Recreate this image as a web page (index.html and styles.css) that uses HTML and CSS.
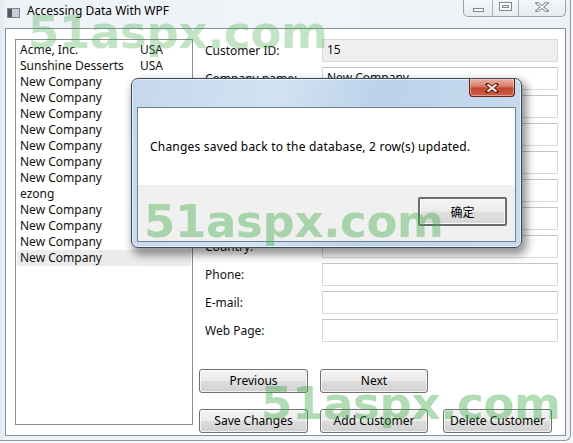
FILE: index.html
```html
<!DOCTYPE html>
<html>
<head>
<meta charset="utf-8">
<link rel="stylesheet" href="styles.css">
</head>
<body>
<div class="window">
  <div class="titlebar">
    <svg class="app-icon" width="13" height="10" viewBox="0 0 13 10"><rect x="0.5" y="0.5" width="12" height="9" fill="#c9ced3" stroke="#7d848b"/><rect x="1" y="1" width="4" height="8" fill="#4f575f"/></svg>
    <span class="title">Accessing Data With WPF</span>
    <div class="caption">
      <div class="cbtn cmin"><svg width="13" height="6" viewBox="0 0 13 6"><rect x="1.5" y="1.5" width="10" height="3" fill="#fff" stroke="#7b8690"/></svg></div>
      <div class="cbtn cmax"><svg width="13" height="9" viewBox="0 0 13 9"><rect x="0.5" y="0.5" width="12" height="8" fill="#fff" stroke="#7b8690"/><rect x="3.5" y="3.5" width="6" height="2" fill="#fff" stroke="#7b8690"/></svg></div>
      <div class="cbtn cclose"><svg width="14" height="10" viewBox="0 0 14 10"><path d="M2 1 L12 9 M12 1 L2 9" stroke="#7b8690" stroke-width="3.2" stroke-linecap="square"/><path d="M2 1 L12 9 M12 1 L2 9" stroke="#fff" stroke-width="1.4"/></svg></div>
    </div>
  </div>
  <div class="client">
    <div class="listbox">
      <div class="item"><span class="name">Acme, Inc.</span><span>USA</span></div>
      <div class="item"><span class="name">Sunshine Desserts</span><span>USA</span></div>
      <div class="item"><span class="name">New Company</span></div>
      <div class="item"><span class="name">New Company</span></div>
      <div class="item"><span class="name">New Company</span></div>
      <div class="item"><span class="name">New Company</span></div>
      <div class="item"><span class="name">New Company</span></div>
      <div class="item"><span class="name">New Company</span></div>
      <div class="item"><span class="name">New Company</span></div>
      <div class="item"><span class="name">ezong</span></div>
      <div class="item"><span class="name">New Company</span></div>
      <div class="item"><span class="name">New Company</span></div>
      <div class="item"><span class="name">New Company</span></div>
      <div class="item selected"><span class="name">New Company</span></div>
    </div>
    <div class="panel">
      <div class="form">
        <label>Customer ID:</label><div class="tb readonly">15</div>
        <label>Company name:</label><div class="tb">New Company</div>
        <label>Contact Name:</label><div class="tb"></div>
        <label>Contact Title:</label><div class="tb"></div>
        <label>Address:</label><div class="tb"></div>
        <label>City:</label><div class="tb"></div>
        <label>Postal Code:</label><div class="tb"></div>
        <label>Country:</label><div class="tb"></div>
        <label>Phone:</label><div class="tb"></div>
        <label>E-mail:</label><div class="tb"></div>
        <label>Web Page:</label><div class="tb"></div>
      </div>
      <div class="btnrow row1">
        <div class="btn w109">Previous</div>
        <div class="btn w108 gap12">Next</div>
      </div>
      <div class="btnrow row2">
        <div class="btn w109">Save Changes</div>
        <div class="btn w108 gap12">Add Customer</div>
        <div class="btn w109 gap15">Delete Customer</div>
      </div>
    </div>
  </div>
</div>

<div class="dialog">
  <div class="dlg-title">
    <div class="dlg-close"><svg width="14" height="10" viewBox="0 0 14 10"><path d="M2.5 1.5 L11.5 8.5 M11.5 1.5 L2.5 8.5" stroke="#5a1a12" stroke-width="3.6" stroke-linecap="square"/><path d="M2.5 1.5 L11.5 8.5 M11.5 1.5 L2.5 8.5" stroke="#fff" stroke-width="1.8"/></svg></div>
  </div>
  <div class="dlg-content">
    <div class="dlg-msg">Changes saved back to the database, 2 row(s) updated.</div>
    <div class="dlg-foot">
      <div class="dlg-ok">确定</div>
    </div>
  </div>
</div>

<div class="wm wm1">51aspx.com</div>
<div class="wm wm2">51aspx.com</div>
<div class="wm wm3">51aspx.com</div>
</body>
</html>
```

FILE: styles.css
```css
* { box-sizing: border-box; }
html, body {
  margin: 0;
  padding: 0;
}
body {
  width: 573px;
  height: 443px;
  overflow: hidden;
  background: #f6f7f8;
  font-family: "Noto Sans", "Noto Sans CJK SC", sans-serif;
  font-size: 12px;
  color: #111;
  position: relative;
}
.window {
  width: 571px;
  height: 441px;
  border-right: 1px solid #8f979f;
  border-bottom: 1px solid #8f979f;
  border-bottom-right-radius: 6px;
  background: linear-gradient(90deg, #dfeaf3 0px, #eef3f7 6px, #f1f4f7 60%, #eef2f6 100%);
  display: flex;
  flex-direction: column;
}
.titlebar {
  height: 28px;
  display: flex;
  align-items: flex-start;
  flex: none;
}
.app-icon {
  margin: 8px 0 0 7px;
  flex: none;
}
.title {
  margin: 3px 0 0 7px;
  line-height: 16px;
  font-size: 12px;
  color: #000;
}
.caption {
  margin-left: auto;
  margin-right: 4px;
  height: 17px;
  width: 103px;
  display: flex;
  border: 1px solid #9aa3ac;
  border-top: none;
  border-radius: 0 0 5px 5px;
  background: linear-gradient(#f4f6f8, #e7ecf1);
  overflow: hidden;
}
.cbtn {
  display: flex;
  align-items: center;
  justify-content: center;
  height: 16px;
}
.cmin { width: 28px; padding-top: 3px; }
.cmax { width: 26px; border-left: 1px solid #a9b1b9; padding-bottom: 3px; }
.cclose { flex: 1; border-left: 1px solid #a9b1b9; padding-bottom: 3px; }

.client {
  flex: none;
  height: 408px;
  margin: 0 4px 4px 5px;
  border: 1px solid #8a9096;
  background: #fff;
  display: flex;
  padding: 10px 7px 10px 9px;
}
.listbox {
  width: 178px;
  height: 386px;
  flex: none;
  border: 1px solid #8a8d91;
  padding: 2px 1px 1px 1px;
}
.item {
  height: 16px;
  line-height: 16px;
  padding-left: 3px;
  display: grid;
  grid-template-columns: 120px auto;
  white-space: nowrap;
}
.item.selected { background: #ebebeb; }

.panel {
  flex: 1;
  display: flex;
  flex-direction: column;
}
.form {
  margin-left: 12px;
  display: grid;
  grid-template-columns: 117px 236px;
  grid-auto-rows: 23px;
  row-gap: 5px;
}
.form label {
  align-self: center;
  line-height: 16px;
  white-space: nowrap;
}
.tb {
  border: 1px solid #d6d9dd;
  border-top-color: #c2c5ca;
  background: #fff;
  padding-left: 4px;
  line-height: 20px;
}
.tb.readonly { background: #efefef; border-color: #d9d9d9; }

.btnrow {
  display: flex;
  margin-left: 6px;
}
.row1 { margin-top: 27px; }
.row2 { margin-top: 16px; }
.btn {
  height: 24px;
  border: 1px solid #707070;
  border-radius: 3px;
  background: linear-gradient(#f3f3f3 0%, #ebebeb 48%, #dddddd 52%, #d0d0d0 100%);
  display: flex;
  align-items: center;
  justify-content: center;
  line-height: 16px;
  color: #000;
  box-shadow: inset 0 0 0 1px rgba(255,255,255,0.7);
}
.w109 { width: 109px; }
.w108 { width: 108px; }
.gap12 { margin-left: 12px; }
.gap15 { margin-left: 15px; }

.dialog {
  position: absolute;
  left: 131px;
  top: 78px;
  width: 391px;
  height: 170px;
  border: 1px solid #3d4b59;
  border-radius: 7px;
  background: linear-gradient(100deg, #c4d8ed 0%, #d2e2f2 35%, #bcd2ea 60%, #c9dcef 100%);
  box-shadow: 3px 5px 9px 2px rgba(0,0,0,0.42), inset 0 0 0 1px rgba(255,255,255,0.55);
  display: flex;
  flex-direction: column;
  padding: 0 5px 5px 5px;
}
.dlg-title {
  height: 28px;
  flex: none;
  display: flex;
  justify-content: flex-end;
  align-items: flex-start;
}
.dlg-close {
  width: 46px;
  height: 18px;
  margin-right: 1px;
  border: 1px solid #5e2219;
  border-top: none;
  border-radius: 0 0 4px 4px;
  background: linear-gradient(#e9b1a3 0%, #d98470 40%, #c3452f 55%, #cc5e47 100%);
  display: flex;
  align-items: center;
  justify-content: center;
  box-shadow: inset 0 0 0 1px rgba(255,220,210,0.5);
}
.dlg-content {
  flex: 1;
  border: 1px solid #6f8192;
  display: flex;
  flex-direction: column;
  background: #f0f0f0;
}
.dlg-msg {
  height: 77px;
  background: #fff;
  display: flex;
  align-items: center;
  padding-left: 12px;
  color: #000;
  white-space: nowrap;
  letter-spacing: 0.2px;
}
.dlg-foot {
  flex: 1;
  display: flex;
  justify-content: flex-end;
  align-items: flex-start;
  padding: 12px 8px 0 0;
}
.dlg-ok {
  width: 89px;
  height: 29px;
  border: 2px solid #6c6c6c;
  border-radius: 2px;
  background: linear-gradient(#f4f4f4 0%, #ececec 48%, #e0e0e0 52%, #d6d6d6 100%);
  box-shadow: inset 0 0 0 1px #fafafa;
  display: flex;
  align-items: center;
  justify-content: center;
  color: #000;
}

.wm {
  position: absolute;
  font-family: "DejaVu Sans", sans-serif;
  font-weight: bold;
  font-size: 45px;
  line-height: 45px;
  letter-spacing: -0.3px;
  color: rgba(60, 170, 70, 0.4);
  white-space: nowrap;
  pointer-events: none;
  filter: blur(0.5px);
}
.wm1 { left: 28px; top: 10px; color: rgba(60, 170, 70, 0.32); }
.wm2 { left: 144px; top: 199px; }
.wm3 { left: 261px; top: 381px; }
```
